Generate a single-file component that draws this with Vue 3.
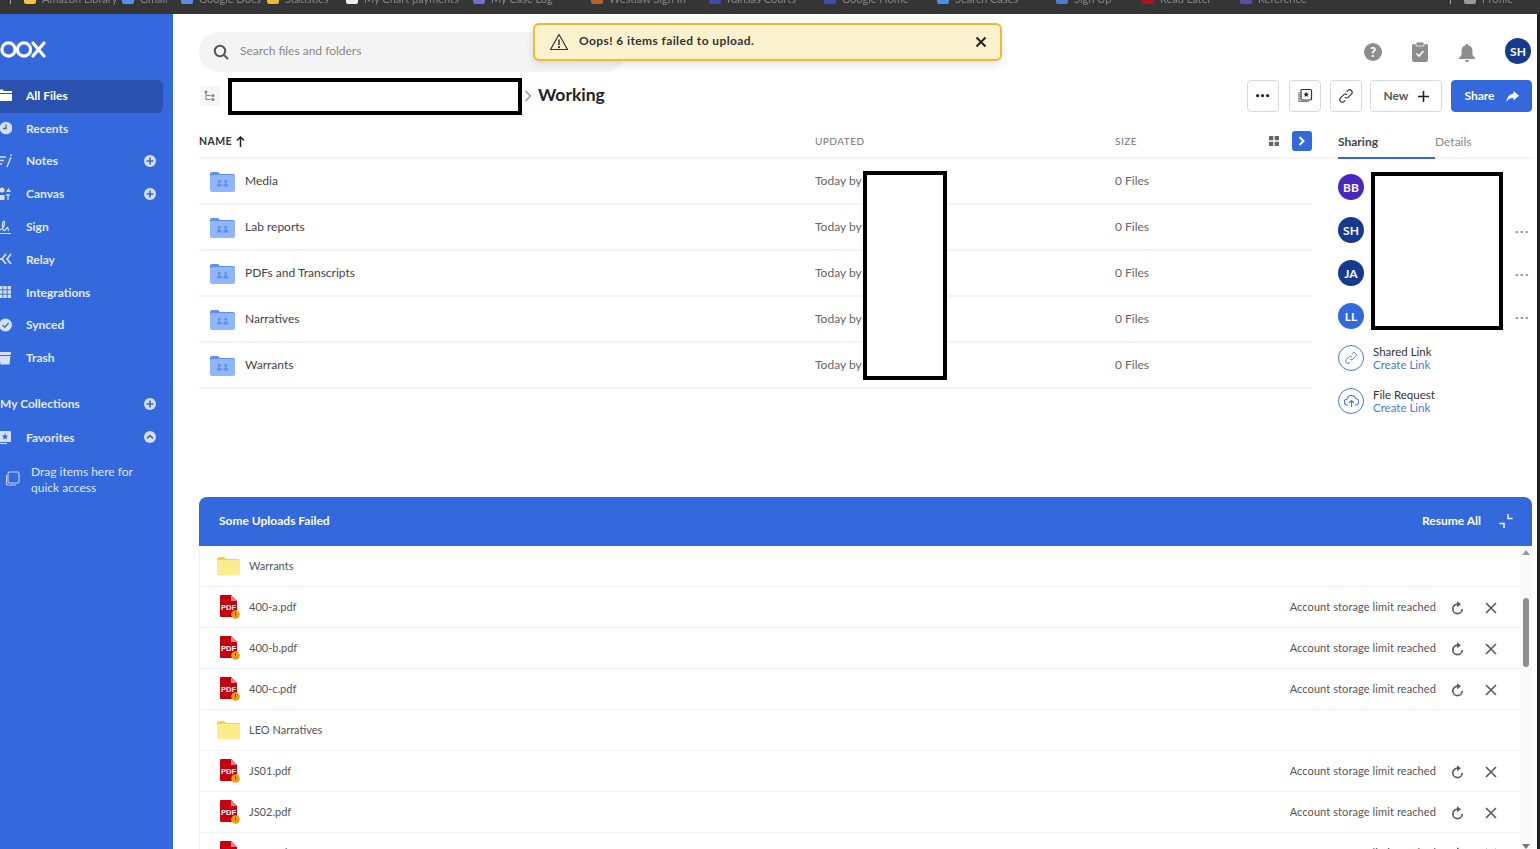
<template>
  <div class="app">
    <div class="bookmarks">
      <span class="sep"></span>
      <template v-for="b in bookmarks" :key="b.label">
        <span class="bookmark" :style="{ width: b.w + 'px' }">
          <i :style="{ background: b.color }"></i>{{ b.label }}
        </span>
        <span v-if="b.sepAfter" class="sep"></span>
      </template>
    </div>

    <div class="body">
      <aside class="sidebar">
        <svg class="logo" width="48" height="20" viewBox="0 0 48 20" fill="none" stroke="#fff" stroke-width="3.2">
          <circle cx="9.5" cy="10.5" r="6.6" />
          <circle cx="25" cy="10.5" r="6.6" />
          <path d="M34 4l11 13M45 4L34 17" stroke-linecap="round" />
        </svg>

        <nav class="nav">
          <a v-for="item in nav" :key="item.label" class="nav-item" :class="{ active: item.active }">
            <svg class="nav-icon" width="16" height="16" viewBox="0 0 16 16" v-html="icons[item.icon]"></svg>
            <span>{{ item.label }}</span>
            <svg v-if="item.plus" class="nav-add" width="12" height="12" viewBox="0 0 12 12">
              <circle cx="6" cy="6" r="6" fill="#d5dff7" />
              <path d="M6 2.6v6.8M2.6 6h6.8" stroke="#3369dc" stroke-width="1.6" />
            </svg>
          </a>
        </nav>

        <a class="nav-item collections">
          <span>My Collections</span>
          <svg class="nav-add" width="12" height="12" viewBox="0 0 12 12">
            <circle cx="6" cy="6" r="6" fill="#d5dff7" />
            <path d="M6 2.6v6.8M2.6 6h6.8" stroke="#3369dc" stroke-width="1.6" />
          </svg>
        </a>
        <a class="nav-item">
          <svg class="nav-icon" width="16" height="16" viewBox="0 0 16 16" v-html="icons.favorites"></svg>
          <span>Favorites</span>
          <svg class="nav-add" width="12" height="12" viewBox="0 0 12 12">
            <circle cx="6" cy="6" r="6" fill="#d5dff7" />
            <path d="M3 7.4L6 4.6l3 2.8" stroke="#3369dc" stroke-width="1.6" fill="none" />
          </svg>
        </a>
        <div class="drag-hint">
          <svg width="16" height="16" viewBox="0 0 16 16" fill="none" stroke="#c3d2f4" stroke-width="1.1">
            <rect x="4" y="1" width="11" height="11" rx="1.5" />
            <path d="M2.5 4v8.5A1.5 1.5 0 0 0 4 14h8" />
          </svg>
          <span>Drag items here for quick access</span>
        </div>
      </aside>

      <main class="main">
        <div class="toast">
          <svg width="20" height="18" viewBox="0 0 20 18" fill="none" stroke="#333" stroke-width="1.2" stroke-linejoin="round">
            <path d="M10 1.5L18.5 16.5H1.5z" />
            <path d="M10 6.5v5.5" stroke-width="1.5" />
            <circle cx="10" cy="14.2" r=".5" />
          </svg>
          <span class="toast-text">Oops! 6 items failed to upload.</span>
          <svg class="toast-close" width="12" height="12" viewBox="0 0 12 12" stroke="#222" stroke-width="2">
            <path d="M1.5 1.5l9 9M10.5 1.5l-9 9" />
          </svg>
        </div>

        <header class="topbar">
          <div class="search">
            <svg width="16" height="16" viewBox="0 0 16 16" fill="none" stroke="#555" stroke-width="2">
              <circle cx="7" cy="7" r="5.2" />
              <path d="M11 11l4 4" />
            </svg>
            <span class="search-text">Search files and folders</span>
          </div>
          <div class="top-icons">
            <svg width="18" height="18" viewBox="0 0 18 18">
              <circle cx="9" cy="9" r="9" fill="#8d8d8d" />
              <text x="9" y="13.5" text-anchor="middle" class="help-q">?</text>
            </svg>
            <svg width="18" height="20" viewBox="0 0 18 20">
              <rect x="1" y="2" width="16" height="18" rx="2" fill="#8d8d8d" />
              <rect x="5" y="0" width="8" height="4" rx="1" fill="#8d8d8d" stroke="#fff" stroke-width=".8" />
              <path d="M5.5 11.5l2.5 2.5 4.5-5" fill="none" stroke="#fff" stroke-width="1.6" />
            </svg>
            <svg width="18" height="19" viewBox="0 0 18 19" fill="#8d8d8d">
              <path d="M9 1c.8 0 1.3.5 1.4 1.2C13 2.900 14.500 5 14.500 8v4L17 15v1H1v-1l2.500-3V8c0-3 1.500-5.100 4.100-5.800C7.700 1.500 8.200 1 9 1z" />
              <path d="M6.800 17h4.400A2.200 2 0 0 1 6.800 17z" />
            </svg>
            <div class="avatar navy">SH</div>
          </div>
        </header>

        <div class="crumbs">
          <div class="tree-btn">
            <svg width="12" height="12" viewBox="0 0 12 12" fill="none" stroke="#888" stroke-width="1.1">
              <path d="M2 2v7.500h5M2 5.500h5" />
              <circle cx="2" cy="2" r="1" fill="#888" />
              <circle cx="9" cy="5.500" r="1" fill="#888" />
              <circle cx="9" cy="9.500" r="1" fill="#888" />
            </svg>
          </div>
          <div class="redact redact-path"></div>
          <svg class="crumb-chevron" width="8" height="12" viewBox="0 0 8 12" fill="none" stroke="#8a8a8a" stroke-width="1.2">
            <path d="M1.500 1l5 5-5 5" />
          </svg>
          <h1>Working</h1>
          <div class="actions">
            <button class="btn square"><span class="dots">•••</span></button>
            <button class="btn square">
              <svg width="16" height="16" viewBox="0 0 16 16" fill="none" stroke="#333" stroke-width="1.200">
                <rect x="4" y="1.500" width="10.500" height="10.500" rx="1" fill="#fff" />
                <path d="M2 4v9.500h9.500" stroke="#777" />
                <path d="M9.200 3.800l.8 1.700 1.800.2-1.300 1.300.3 1.800-1.600-.9-1.600.9.300-1.800-1.300-1.300 1.800-.2z" fill="#222" stroke="none" />
              </svg>
            </button>
            <button class="btn square">
              <svg width="16" height="16" viewBox="0 0 16 16" fill="none" stroke="#333" stroke-width="1.100">
                <path d="M6.800 9.200a2.500 2.500 0 0 0 3.600 0l3-3a2.500 2.500 0 0 0-3.600-3.600l-1 1" />
                <path d="M9.200 6.800a2.500 2.500 0 0 0-3.600 0l-3 3a2.500 2.500 0 0 0 3.600 3.600l1-1" />
              </svg>
            </button>
            <button class="btn new">
              New
              <svg width="11" height="11" viewBox="0 0 11 11" stroke="#222" stroke-width="1.600">
                <path d="M5.500 0v11M0 5.500h11" />
              </svg>
            </button>
            <button class="btn share">
              Share
              <svg width="13" height="11" viewBox="0 0 13 11" fill="#fff">
                <path d="M7.500 0L13 4.800 7.500 9.600V6.800C4.500 6.800 2.300 7.800.5 11 .8 6.500 3.400 3.200 7.500 2.800z" />
              </svg>
            </button>
          </div>
        </div>

        <div class="content">
          <section class="list">
            <div class="redact redact-updated"></div>
            <div class="list-head row-grid">
              <span class="col-name">NAME
                <svg width="9" height="11" viewBox="0 0 9 11" fill="none" stroke="#222" stroke-width="1.500">
                  <path d="M4.500 11V1M1 4.500L4.500 1 8 4.500" />
                </svg>
              </span>
              <span class="col-label">UPDATED</span>
              <span class="col-label">SIZE</span>
              <div class="view-btns">
                <svg width="10" height="10" viewBox="0 0 10 10" fill="#666">
                  <rect width="4.300" height="4.300" rx=".5" />
                  <rect x="5.700" width="4.300" height="4.300" rx=".5" />
                  <rect y="5.700" width="4.300" height="4.300" rx=".5" />
                  <rect x="5.700" y="5.700" width="4.300" height="4.300" rx=".5" />
                </svg>
                <div class="toggle">
                  <svg width="8" height="10" viewBox="0 0 8 10" fill="none" stroke="#fff" stroke-width="2">
                    <path d="M1.500 1l4 4-4 4" />
                  </svg>
                </div>
              </div>
            </div>
            <div v-for="f in folders" :key="f" class="list-row row-grid">
              <span class="folder-cell">
                <svg width="25" height="21" viewBox="0 0 25 21">
                  <path d="M0 3a2 2 0 0 1 2-2h6l2 2h13a2 2 0 0 1 2 2v5H0z" fill="#5f8ff0" />
                  <rect y="4" width="25" height="17" rx="2" fill="#90b6ff" />
                  <g fill="#5f8ff0">
                    <circle cx="9.300" cy="10.200" r="1.500" />
                    <circle cx="15.700" cy="10.200" r="1.500" />
                    <path d="M6.800 15.500c0-2.200 1-3.200 2.500-3.200s2.500 1 2.500 3.200zM13.200 15.500c0-2.200 1-3.200 2.500-3.200s2.500 1 2.500 3.200z" />
                  </g>
                </svg>
                <span class="row-text">{{ f }}</span>
              </span>
              <span class="row-text">Today by</span>
              <span class="row-text">0 Files</span>
            </div>
          </section>

          <section class="side">
            <div class="redact redact-people"></div>
            <div class="tabs">
              <span class="tab on">Sharing</span>
              <span class="tab">Details</span>
            </div>
            <div class="people">
              <div v-for="p in people" :key="p.initials" class="person">
                <div class="avatar" :class="p.tone">{{ p.initials }}</div>
                <span v-if="p.more" class="more">•••</span>
              </div>
            </div>
            <div class="link-block">
              <div class="ring">
                <svg width="14" height="14" viewBox="0 0 16 16" fill="none" stroke="#4a78d8" stroke-width="1.100">
                  <path d="M6.800 9.200a2.500 2.500 0 0 0 3.600 0l3-3a2.500 2.500 0 0 0-3.600-3.600l-1 1" />
                  <path d="M9.200 6.800a2.500 2.500 0 0 0-3.600 0l-3 3a2.500 2.500 0 0 0 3.600 3.600l1-1" />
                </svg>
              </div>
              <div class="link-text">
                <span>Shared Link</span>
                <a>Create Link</a>
              </div>
            </div>
            <div class="link-block">
              <div class="ring">
                <svg width="15" height="14" viewBox="0 0 15 14" fill="none" stroke="#4a78d8" stroke-width="1.100">
                  <path d="M4 11H3.500a3 3 0 0 1-.3-6A4.300 4.300 0 0 1 11.500 4.500a3.200 3.200 0 0 1 0 6.500H11" />
                  <path d="M7.500 13V7M5 9l2.500-2.500L10 9" />
                </svg>
              </div>
              <div class="link-text">
                <span>File Request</span>
                <a>Create Link</a>
              </div>
            </div>
          </section>
        </div>

        <section class="uploads">
          <div class="uploads-head">
            <span>Some Uploads Failed</span>
            <span class="resume">Resume All</span>
            <svg width="14" height="14" viewBox="0 0 14 14" fill="none" stroke="#fff" stroke-width="1.400">
              <path d="M9 0v4.500h4.500M0.500 9.500H5V14" />
            </svg>
          </div>
          <div class="uploads-body">
            <div class="uploads-rows">
              <div v-for="u in uploads" :key="u.name" class="upload-row">
                <svg v-if="u.folder" class="file-icon" width="23" height="18" viewBox="0 0 23 18">
                  <path d="M0 2a2 2 0 0 1 2-2h5l2 2h12a2 2 0 0 1 2 2v5H0z" fill="#f8d22e" />
                  <rect y="3" width="23" height="15" rx="2" fill="#fdec8c" />
                </svg>
                <svg v-else class="file-icon" width="23" height="24" viewBox="0 0 23 24">
                  <path d="M3 1a1 1 0 0 1 1-1h10l6 6v15a1 1 0 0 1-1 1H4a1 1 0 0 1-1-1z" fill="#c5000f" />
                  <path d="M14 0l6 6h-6z" fill="#e77f86" />
                  <text x="11.500" y="14.500" text-anchor="middle" class="pdf-label">PDF</text>
                  <circle cx="18.500" cy="19.500" r="4.300" fill="#ee9c12" />
                  <path d="M18.500 17v3.500" stroke="#7a4a00" stroke-width="1" />
                </svg>
                <span class="upload-name">{{ u.name }}</span>
                <template v-if="!u.folder">
                  <span class="upload-error">Account storage limit reached</span>
                  <svg class="retry" width="13" height="14" viewBox="0 0 13 14" fill="none" stroke="#5c5c5c" stroke-width="1.700">
                    <path d="M6.500 3.200a4.700 4.700 0 1 0 4.700 4.700" />
                    <path d="M6 .2l4 3-4 3z" fill="#5c5c5c" stroke="none" />
                  </svg>
                  <svg class="dismiss" width="12" height="12" viewBox="0 0 12 12" stroke="#5c5c5c" stroke-width="1.700">
                    <path d="M1 1l10 10M11 1L1 11" />
                  </svg>
                </template>
              </div>
            </div>
            <div class="scroll">
              <i class="arrow up"></i>
              <i class="thumb"></i>
              <i class="arrow down"></i>
            </div>
          </div>
        </section>
      </main>
    </div>
  </div>
</template>

<script setup>
const bookmarks = [
  { label: 'Amazon Library', w: 98, color: '#f4c542' },
  { label: 'Gmail', w: 59, color: '#5b8def' },
  { label: 'Google Docs', w: 86, color: '#5b8def' },
  { label: 'Statistics', w: 79, color: '#e8b93a' },
  { label: 'My Chart payments', w: 127, color: '#eeeeee' },
  { label: 'My Case Log', w: 118, color: '#6a6fd0' },
  { label: 'Westlaw Sign In', w: 118, color: '#b5622b' },
  { label: 'Kansas Courts', w: 115, color: '#3d4fa8' },
  { label: 'Google Home', w: 113, color: '#4050a8' },
  { label: 'Search Cases', w: 119, color: '#4a90e2' },
  { label: 'Sign Up', w: 86, color: '#4a7fd0' },
  { label: 'Read Later', w: 98, color: '#b3121d' },
  { label: 'Reference', w: 210, color: '#5a4fa8', sepAfter: true },
  { label: 'Profile', w: 70, color: '#999999' }
]

const nav = [
  { label: 'All Files', icon: 'files', active: true },
  { label: 'Recents', icon: 'recents' },
  { label: 'Notes', icon: 'notes', plus: true },
  { label: 'Canvas', icon: 'canvas', plus: true },
  { label: 'Sign', icon: 'sign' },
  { label: 'Relay', icon: 'relay' },
  { label: 'Integrations', icon: 'grid' },
  { label: 'Synced', icon: 'synced' },
  { label: 'Trash', icon: 'trash' }
]

const icons = {
  files: '<path fill="#fff" d="M0 2.500h6.500L8 4h8v2H0zM0 7h16v7H0z"/>',
  recents: '<circle cx="10" cy="8" r="6.300" fill="#d5dff7"/><path d="M10 4.500V8.500H7" stroke="#3369dc" stroke-width="1.400" fill="none"/>',
  notes: '<path d="M1 4h9M1 7.500h7M1 11h5M15 4l-4 10" stroke="#d5dff7" stroke-width="1.500" fill="none"/><circle cx="15" cy="2" r=".9" fill="#d5dff7"/>',
  canvas: '<circle cx="6" cy="4" r="2.500" fill="#d5dff7"/><rect x="3.500" y="9" width="5" height="5" fill="#d5dff7"/><path d="M10 6l2.500-4L15 6z" fill="#d5dff7"/><path d="M10 9h4M12 9v5" stroke="#d5dff7" stroke-width="1.300"/>',
  sign: '<path d="M4 11c3-1 5-5 4.500-8-.5-2-2 0-2 3 0 3 .5 6 2 5.500 2-.5 2-3 3-3s0 3 1.500 3" stroke="#d5dff7" stroke-width="1.300" fill="none"/><path d="M2 14.500h13" stroke="#d5dff7" stroke-width="1"/>',
  relay: '<path d="M10 3L6 8l4 5M15 3l-4 5 4 5" stroke="#d5dff7" stroke-width="1.800" fill="none"/><path d="M4 7h2v2H4z" fill="#d5dff7"/>',
  grid: '<g fill="#d5dff7"><rect x="3" y="2" width="3.400" height="3.400"/><rect x="7.300" y="2" width="3.400" height="3.400"/><rect x="11.600" y="2" width="3.400" height="3.400"/><rect x="3" y="6.300" width="3.400" height="3.400"/><rect x="7.300" y="6.300" width="3.400" height="3.400"/><rect x="11.600" y="6.300" width="3.400" height="3.400"/><rect x="3" y="10.600" width="3.400" height="3.400"/><rect x="7.300" y="10.600" width="3.400" height="3.400"/><rect x="11.600" y="10.600" width="3.400" height="3.400"/></g>',
  synced: '<circle cx="9.500" cy="8" r="6.500" fill="#d5dff7"/><path d="M6.500 8l2.200 2.200 4-4.200" stroke="#3369dc" stroke-width="1.400" fill="none"/>',
  trash: '<path d="M3 2h12l-1.500 12.500h-9z" fill="#d5dff7"/><path d="M3 5.500h12" stroke="#3369dc" stroke-width="1"/>',
  favorites: '<rect x="3" y="2" width="12" height="11" rx="1" fill="#d5dff7"/><path d="M9 4.500l1 2 2.200.2-1.700 1.500.5 2.200L9 9.300l-2 1.100.5-2.200-1.700-1.500L8 6.500z" fill="#3369dc"/><path d="M0 14.500h11" stroke="#d5dff7" stroke-width="1.200"/>'
}

const folders = ['Media', 'Lab reports', 'PDFs and Transcripts', 'Narratives', 'Warrants']

const people = [
  { initials: 'BB', tone: 'purple' },
  { initials: 'SH', tone: 'navy', more: true },
  { initials: 'JA', tone: 'navy', more: true },
  { initials: 'LL', tone: 'blue', more: true }
]

const uploads = [
  { name: 'Warrants', folder: true },
  { name: '400-a.pdf' },
  { name: '400-b.pdf' },
  { name: '400-c.pdf' },
  { name: 'LEO Narratives', folder: true },
  { name: 'JS01.pdf' },
  { name: 'JS02.pdf' },
  { name: 'JS03.pdf' }
]
</script>

<style>
html, body {
  margin: 0;
  overflow: hidden;
}
</style>

<style scoped>
.app {
  width: 1540px;
  height: 849px;
  display: flex;
  flex-direction: column;
  overflow: hidden;
  font-family: Lato, "Liberation Sans", sans-serif;
  color: #333;
  background: #fff;
}

.bookmarks {
  height: 14px;
  flex: none;
  background: #353535;
  display: flex;
  padding-left: 10px;
  overflow: hidden;
  color: #858585;
  font-size: 11px;
  line-height: 10px;
}
.sep {
  flex: none;
  width: 1px;
  height: 4px;
  background: #aaa;
  margin-right: 13px;
}
.bookmark {
  flex: none;
  margin-top: -6px;
  white-space: nowrap;
  filter: blur(.7px);
}
.bookmark i {
  display: inline-block;
  width: 12px;
  height: 10px;
  margin-right: 6px;
  vertical-align: top;
  border-radius: 2px;
}

.body {
  flex: 1;
  min-height: 0;
  display: flex;
  border-right: 3px solid #222;
}

.sidebar {
  width: 173px;
  flex: none;
  background: #3369dc;
  color: #e3eafb;
  font-size: 12px;
  font-weight: 700;
}
.logo {
  display: block;
  margin: 25px 0 21px -1px;
}
.nav-item {
  height: 32.8px;
  display: flex;
  align-items: center;
  gap: 14px;
  width: 163px;
  box-sizing: border-box;
  padding-bottom: 2px;
  border-radius: 0 6px 6px 0;
}
.nav-item.active {
  background: #2b52ae;
  color: #fff;
}
.nav-icon {
  margin-left: -4px;
  flex: none;
}
.nav-add {
  margin-left: auto;
  margin-right: 7px;
}
.collections {
  margin-top: 13px;
  height: 33.6px;
}
.drag-hint {
  display: flex;
  gap: 11px;
  margin: 9px 0 0 4px;
  width: 135px;
  color: #dfe7fa;
  font-size: 12px;
  font-weight: 400;
  line-height: 16.5px;
}
.drag-hint svg {
  flex: none;
  margin-top: 7px;
}

.main {
  flex: 1;
  min-width: 0;
  position: relative;
  display: flex;
  flex-direction: column;
  padding: 18px 5px 0 26px;
}

.toast {
  position: absolute;
  left: 360px;
  top: 9px;
  width: 469px;
  height: 38px;
  box-sizing: border-box;
  display: flex;
  align-items: center;
  gap: 10px;
  padding: 0 13px 0 14px;
  background: #faf1cf;
  border: 2px solid #ecbc2e;
  border-radius: 6px;
  box-shadow: 0 3px 8px rgba(0, 0, 0, .12);
  z-index: 2;
}
.toast-text {
  font-size: 12px;
  font-weight: 700;
  letter-spacing: .4px;
  margin-top: -4px;
}
.toast-close {
  margin-left: auto;
}

.topbar {
  height: 40px;
  display: flex;
  align-items: center;
  justify-content: space-between;
}
.search {
  width: 426px;
  height: 40px;
  display: flex;
  align-items: center;
  gap: 11px;
  padding-left: 14px;
  box-sizing: border-box;
  background: #f4f4f4;
  border-radius: 20px;
  color: #888;
  font-size: 12px;
}
.search-text {
  margin-top: -3px;
}
.top-icons {
  display: flex;
  align-items: center;
  gap: 29px;
  margin-right: 1px;
}
.help-q {
  font-size: 13px;
  font-weight: 900;
  fill: #fff;
}
.avatar {
  width: 26px;
  height: 26px;
  border-radius: 50%;
  display: flex;
  align-items: center;
  justify-content: center;
  color: #fff;
  font-size: 12px;
  font-weight: 700;
  flex: none;
}
.top-icons .avatar {
  margin-top: -2px;
}
.navy { background: #163a8f; }
.purple { background: #4826c2; }
.blue { background: #3369dc; }

.crumbs {
  position: relative;
  height: 32px;
  margin-top: 8px;
  display: flex;
  align-items: center;
}
.tree-btn {
  width: 20px;
  height: 20px;
  margin-left: 1px;
  background: #f6f6f6;
  border-radius: 2px;
  display: flex;
  align-items: center;
  justify-content: center;
}
.redact {
  position: absolute;
  box-sizing: border-box;
  background: #fff;
  border: 4px solid #000;
  z-index: 1;
}
.redact-path {
  left: 29px;
  top: -2px;
  width: 294px;
  height: 37px;
}
.redact-updated {
  left: 664px;
  top: 59px;
  width: 84px;
  height: 209px;
}
.redact-people {
  left: 33px;
  top: 60px;
  width: 132px;
  height: 158px;
}
.crumb-chevron {
  margin-left: 304px;
}
h1 {
  margin: -3px 0 0 6px;
  font-size: 17.500px;
  font-weight: 700;
  color: #222;
}
.actions {
  margin-left: auto;
  display: flex;
  gap: 9px;
}
.btn {
  height: 32px;
  box-sizing: border-box;
  border: 1px solid #d8d8d8;
  border-radius: 4px;
  background: #fff;
  display: flex;
  align-items: center;
  justify-content: center;
  font-family: inherit;
  font-size: 12px;
  font-weight: 700;
  padding: 0 0 2px;
}
.btn svg {
  margin-top: 2px;
}
.square {
  width: 32px;
}
.square:first-child {
  margin-right: 1px;
}
.dots {
  font-size: 7px;
  letter-spacing: 1px;
  color: #222;
}
.new {
  width: 72px;
  margin-left: -1px;
  gap: 9px;
  color: #555;
}
.share {
  width: 81px;
  gap: 11px;
  color: #fff;
  background: #3369dc;
  border-color: #3369dc;
}

.content {
  display: flex;
  gap: 26px;
}
.list {
  width: 1113px;
  flex: none;
  position: relative;
}
.row-grid {
  display: grid;
  grid-template-columns: 616px 300px 1fr auto;
  align-items: center;
  font-size: 12px;
  color: #666;
}
.list-head {
  height: 47px;
  box-sizing: border-box;
  padding-top: 13px;
  border-bottom: 2px solid #f4f4f4;
}
.col-name {
  font-size: 10.500px;
  font-weight: 700;
  color: #333;
  letter-spacing: .4px;
  display: flex;
  align-items: center;
  gap: 4px;
}
.col-label {
  font-size: 10px;
  color: #777;
  letter-spacing: .5px;
}
.view-btns {
  display: flex;
  align-items: center;
  justify-content: flex-end;
  gap: 13px;
}
.toggle {
  width: 20px;
  height: 20px;
  background: #3369dc;
  border-radius: 3px;
  display: flex;
  align-items: center;
  justify-content: center;
}
.list-row {
  height: 46px;
  box-sizing: border-box;
  border-bottom: 2px solid #f4f4f4;
}
.row-text {
  margin-top: -2px;
}
.folder-cell {
  display: flex;
  align-items: center;
  gap: 10px;
  padding-left: 11px;
  font-size: 12px;
  color: #444;
}

.side {
  flex: 1;
  position: relative;
}
.tabs {
  display: flex;
  height: 47px;
  box-sizing: border-box;
  border-bottom: 2px solid #f4f4f4;
  padding-top: 13px;
  margin-left: -26px;
  padding-left: 26px;
  font-size: 12px;
  color: #888;
}
.tab {
  width: 97px;
  display: flex;
  align-items: center;
  height: 34px;
  box-sizing: border-box;
  border-bottom: 2px solid transparent;
}
.tab.on {
  color: #444;
  font-weight: 700;
  border-bottom-color: #3369dc;
}
.people {
  padding-top: 15px;
  display: flex;
  flex-direction: column;
  gap: 17px;
}
.person {
  display: flex;
  align-items: center;
  justify-content: space-between;
  padding-right: 2px;
}
.more {
  font-size: 6px;
  letter-spacing: 1.500px;
  color: #888;
  margin-top: 3px;
}
.link-block {
  display: flex;
  align-items: center;
  gap: 9px;
  height: 26px;
  margin-top: 17px;
}
.people + .link-block {
  margin-top: 16px;
}
.ring {
  width: 26px;
  height: 26px;
  box-sizing: border-box;
  border: 1px solid #4a78d8;
  border-radius: 50%;
  display: flex;
  align-items: center;
  justify-content: center;
  flex: none;
}
.link-text {
  display: flex;
  flex-direction: column;
  font-size: 11.500px;
  line-height: 13px;
  color: #333;
}
.link-text a {
  color: #4a78d8;
}

.uploads {
  margin-top: auto;
  height: 352px;
  flex: none;
  display: flex;
  flex-direction: column;
  overflow: hidden;
}
.uploads-head {
  height: 49px;
  flex: none;
  display: flex;
  align-items: center;
  padding: 0 19px 2px 20px;
  box-sizing: border-box;
  background: #3369dc;
  border-radius: 8px 8px 0 0;
  color: #fff;
  font-size: 12px;
  font-weight: 700;
}
.resume {
  margin-left: auto;
  margin-right: 18px;
}
.uploads-body {
  flex: 1;
  min-height: 0;
  display: flex;
  box-shadow: inset 1px 0 0 #f2f2f2;
}
.uploads-rows {
  flex: 1;
  min-width: 0;
}
.upload-row {
  height: 41px;
  box-sizing: border-box;
  display: flex;
  align-items: center;
  padding-left: 18px;
  border-bottom: 1px solid #f1f1f1;
  font-size: 11px;
  color: #555;
}
.file-icon {
  width: 23px;
  flex: none;
  margin-right: 9px;
}
.pdf-label {
  font-family: "Liberation Sans", sans-serif;
  font-size: 7.500px;
  font-weight: 700;
  fill: #fff;
}
.upload-name {
  margin-top: -2px;
}
.upload-error {
  margin-left: auto;
  margin-top: -2px;
  letter-spacing: .1px;
}
.retry {
  margin-left: 15px;
  margin-top: 1px;
}
.dismiss {
  margin-left: 21px;
  margin-right: 23px;
  margin-top: 2px;
}
.scroll {
  width: 12px;
  flex: none;
  background: #fafafa;
  position: relative;
}
.thumb {
  position: absolute;
  left: 3px;
  top: 52px;
  width: 6px;
  height: 69px;
  background: #8e8e8e;
  border-radius: 3px;
}
.arrow {
  position: absolute;
  left: 2px;
  width: 0;
  height: 0;
  border-left: 4px solid transparent;
  border-right: 4px solid transparent;
}
.arrow.up {
  top: 4px;
  border-bottom: 5px solid #999;
}
.arrow.down {
  bottom: 0;
  border-top: 5px solid #777;
}
</style>
